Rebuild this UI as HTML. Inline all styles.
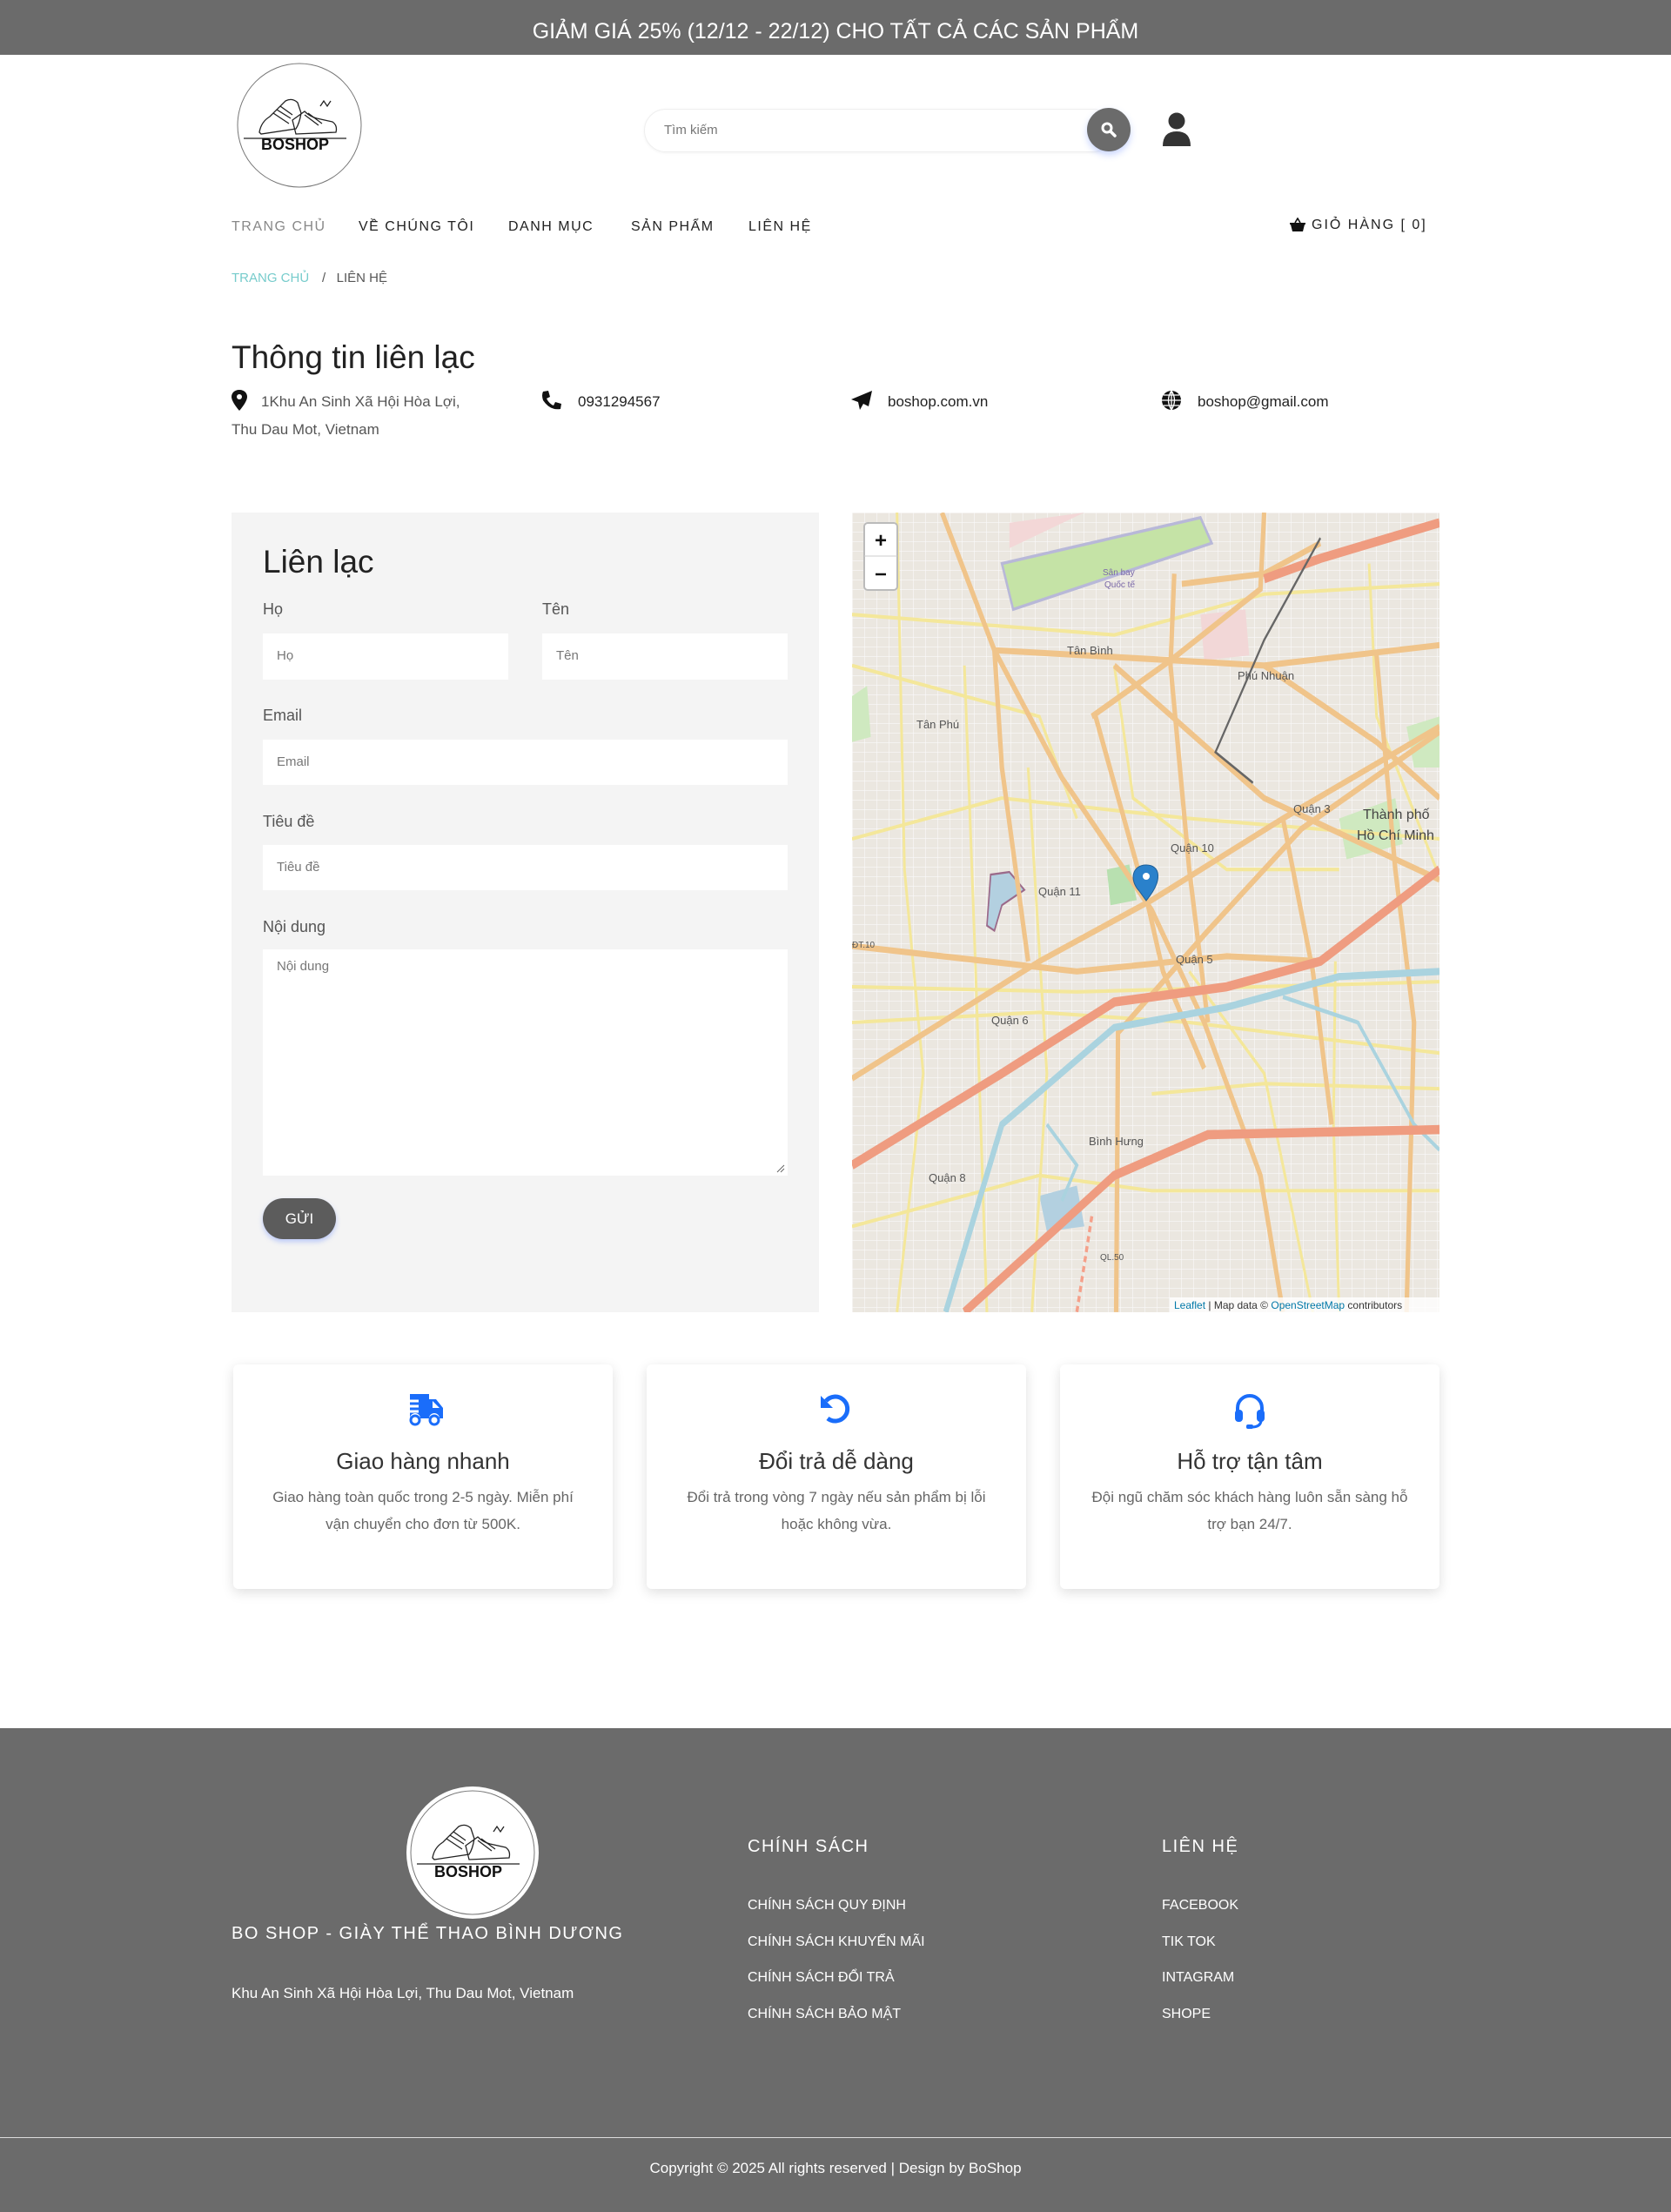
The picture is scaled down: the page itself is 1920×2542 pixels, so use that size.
<!DOCTYPE html>
<html><head><meta charset="utf-8">
<style>
*{box-sizing:border-box;margin:0;padding:0}
body{width:1920px;height:2542px;position:relative;font-family:"Liberation Sans","Noto Sans CJK SC",sans-serif;background:#fff;color:#222;overflow:hidden}
.a{position:absolute;white-space:nowrap}
.top{left:0;top:0;width:1920px;height:63px;background:#6b6b6b;color:#fff;font-size:25px;text-align:center;line-height:72px}
.nav{top:252px;font-size:16px;letter-spacing:1.5px;color:#222}
.inp{background:#fff;position:absolute;font-size:15px;color:#777;padding-left:16px;line-height:52px}
.lbl{font-size:18px;color:#555}
.card{position:absolute;top:1568px;width:436px;height:258px;background:#fff;border-radius:6px;box-shadow:0 4px 14px rgba(0,0,0,.13);text-align:center}
.card h3{font-weight:normal;font-size:26px;color:#333;margin-top:96px}
.card p{font-size:17px;color:#666;line-height:31px;margin-top:10px;padding:0 36px}
.card svg{position:absolute;left:50%;top:32px;transform:translateX(-50%)}
.fl{font-size:16px;color:#fff}
</style></head><body>
<div class="a top">GIẢM GIÁ 25% (12/12 - 22/12) CHO TẤT CẢ CÁC SẢN PHẨM</div>

<svg class="a" style="left:270px;top:72px" width="148" height="148" viewBox="0 0 148 148">
<circle cx="74" cy="72" r="71" fill="#fff" stroke="#777" stroke-width="1"/>
<g fill="none" stroke="#222" stroke-width="1.3">
<path d="M28 80 Q30 68 40 62 L58 44 Q66 40 72 46 L76 58 Q74 70 70 76 L30 82 Z"/>
<path d="M66 66 L80 56 Q86 62 94 64 L112 68 Q118 72 116 80 L70 82 Z"/>
<path d="M44 58 L62 70 M48 54 L64 64 M52 50 L66 60 M80 60 L96 72 M84 58 L100 70"/>
<path d="M98 50 L102 44 L106 50 L110 44"/>
<path d="M10 87 H128"/>
</g>
<text x="69" y="100" text-anchor="middle" font-family="Liberation Sans" font-weight="bold" font-size="18" fill="#111">BOSHOP</text>
</svg>

<div class="a" style="left:740px;top:125px;width:540px;height:50px;border:1px solid #eee;border-radius:25px;box-shadow:0 1px 3px rgba(0,0,0,.05)"></div>
<div class="a" style="left:763px;top:141px;font-size:15px;color:#777">Tìm kiếm</div>
<div class="a" style="left:1249px;top:124px;width:50px;height:50px;border-radius:50%;background:#6b6b6b;box-shadow:0 4px 8px rgba(80,120,255,.3)"></div>
<svg class="a" style="left:1264px;top:139px" width="20" height="20" viewBox="0 0 20 20"><circle cx="8" cy="8" r="5" fill="none" stroke="#fff" stroke-width="3"/><path d="M12 12 L17 17" stroke="#fff" stroke-width="3.5" stroke-linecap="round"/></svg>
<svg class="a" style="left:1334px;top:129px" width="36" height="40" viewBox="0 0 36 40"><circle cx="18" cy="10" r="9.5" fill="#333"/><path d="M2 39 Q2 22 18 22 Q34 22 34 39 Z" fill="#333"/></svg>

<div class="a nav" style="left:266px;color:#888">TRANG CHỦ</div>
<div class="a nav" style="left:412px">VỀ CHÚNG TÔI</div>
<div class="a nav" style="left:584px">DANH MỤC</div>
<div class="a nav" style="left:725px">SẢN PHẨM</div>
<div class="a nav" style="left:860px">LIÊN HỆ</div>
<svg class="a" style="left:1482px;top:250px" width="18" height="16" viewBox="0 0 18 16"><path d="M6 6 L9 1 L12 6" fill="none" stroke="#111" stroke-width="1.6"/><path d="M0 6 H18 V8 H17 L15 16 H3 L1 8 H0Z" fill="#111"/></svg>
<div class="a nav" style="left:1507px;top:250px;letter-spacing:2px">GIỎ HÀNG [ 0]</div>

<div class="a" style="left:266px;top:311px;font-size:15px;color:#7cc;">TRANG CHỦ</div>
<div class="a" style="left:370px;top:311px;font-size:15px;color:#555">/&nbsp;&nbsp;&nbsp;LIÊN HỆ</div>

<div class="a" style="left:266px;top:390px;font-size:37px;color:#222">Thông tin liên lạc</div>
<svg class="a" style="left:266px;top:448px" width="18" height="24" viewBox="0 0 18 24"><path d="M9 0 C3 0 0 4 0 8 C0 14 9 24 9 24 C9 24 18 14 18 8 C18 4 15 0 9 0Z" fill="#111"/><circle cx="9" cy="8" r="3" fill="#fff"/></svg>
<div class="a" style="left:300px;top:452px;font-size:17px;color:#555">1Khu An Sinh Xã Hội Hòa Lợi,</div>
<div class="a" style="left:266px;top:484px;font-size:17px;color:#555">Thu Dau Mot, Vietnam</div>
<svg class="a" style="left:622px;top:448px" width="24" height="24" viewBox="0 0 24 24"><path d="M2 2 L8 1 L10 8 L6 10 Q9 16 14 18 L16 14 L23 16 L22 22 Q10 24 2 12 Q0 6 2 2Z" fill="#111"/></svg>
<div class="a" style="left:664px;top:452px;font-size:17px;color:#222">0931294567</div>
<svg class="a" style="left:978px;top:449px" width="24" height="22" viewBox="0 0 24 22"><path d="M24 0 L0 10 L8 13 L10 22 L14 15 L20 18Z" fill="#111"/></svg>
<div class="a" style="left:1020px;top:452px;font-size:17px;color:#222">boshop.com.vn</div>
<svg class="a" style="left:1334px;top:448px" width="24" height="24" viewBox="0 0 24 24"><circle cx="12" cy="12" r="11" fill="#111"/><path d="M12 1 V23 M1 12 H23 M3 6 H21 M3 18 H21 M12 1 Q5 12 12 23 M12 1 Q19 12 12 23" stroke="#fff" stroke-width="1.3" fill="none"/></svg>
<div class="a" style="left:1376px;top:452px;font-size:17px;color:#222">boshop@gmail.com</div>

<div class="a" style="left:266px;top:589px;width:675px;height:919px;background:#f4f4f4"></div>
<div class="a" style="left:302px;top:625px;font-size:37px;color:#222">Liên lạc</div>
<div class="a lbl" style="left:302px;top:690px">Họ</div>
<div class="a lbl" style="left:623px;top:690px">Tên</div>
<div class="inp" style="left:302px;top:728px;width:282px;height:53px">Họ</div>
<div class="inp" style="left:623px;top:728px;width:282px;height:53px">Tên</div>
<div class="a lbl" style="left:302px;top:812px">Email</div>
<div class="inp" style="left:302px;top:850px;width:603px;height:52px">Email</div>
<div class="a lbl" style="left:302px;top:934px">Tiêu đề</div>
<div class="inp" style="left:302px;top:971px;width:603px;height:52px">Tiêu đề</div>
<div class="a lbl" style="left:302px;top:1055px">Nội dung</div>
<div class="inp" style="left:302px;top:1091px;width:603px;height:260px;line-height:40px">Nội dung</div>
<svg class="a" style="left:892px;top:1338px" width="10" height="10"><path d="M1 9 L9 1 M5 9 L9 5" stroke="#666"/></svg>
<div class="a" style="left:302px;top:1377px;width:84px;height:47px;border-radius:24px;background:#5c5c5c;color:#fff;font-size:17px;text-align:center;line-height:47px;box-shadow:0 3px 6px rgba(80,120,255,.35)">GỬI</div>

<svg class="a" style="left:979px;top:589px" width="675" height="919" viewBox="0 0 675 919">
<defs><pattern id="p" width="14" height="11" patternUnits="userSpaceOnUse"><rect width="14" height="11" fill="#ebe7e0"/><path d="M0 0H14M0 0V11" stroke="#fafafa" stroke-width="1.2"/></pattern></defs>
<rect width="675" height="919" fill="url(#p)"/>
<g transform="scale(0.4305,0.586)">
<path d="M400 100 L930 10 L960 60 L430 190Z" fill="#c5e3a6" stroke="#b8b8d8" stroke-width="6"/>
<path d="M420 20 L620 0 L420 70Z" fill="#f3d7d7"/>
<path d="M930 200 L1050 190 L1060 280 L940 290Z" fill="#f2d7d7"/>
<path d="M680 700 L740 690 L760 760 L690 770Z" fill="#b8e0b0"/>
<path d="M1300 600 L1450 560 L1470 650 L1320 680Z" fill="#cfe9c0"/>
<path d="M1480 420 L1568 400 L1568 500 L1500 500Z" fill="#cfe9c0"/>
<path d="M0 360 L40 340 L50 440 L0 450Z" fill="#cfe9c0"/>
<path d="M370 710 L420 705 L460 740 L400 770 L380 820 L360 810 Z" fill="#b3d0e0" stroke="#9b6a8a" stroke-width="4"/>
<path d="M500 1340 L600 1320 L620 1400 L520 1410Z" fill="#b3d0e0"/>
<g fill="none" stroke="#f4e79a" stroke-width="7">
<path d="M0 200 L700 240 L1100 160 L1568 140"/><path d="M0 640 L400 560 L900 600 L1568 640"/><path d="M0 1000 L500 980 L900 1000 L1568 1060"/><path d="M120 0 L140 700 L190 1100 L120 1568"/><path d="M300 300 L330 900 L360 1568"/><path d="M470 500 L520 1100 L480 1568"/><path d="M900 900 L1100 1100 L1230 1568"/><path d="M0 1400 L500 1300 L800 1330 L1568 1330"/><path d="M1290 880 L1285 1200 L1300 1568"/><path d="M700 300 L750 560 L1000 700 L1300 700"/><path d="M0 930 L600 940 L1568 920"/><path d="M1380 100 L1400 400 L1560 700"/><path d="M0 300 L500 400 L600 600"/><path d="M800 1140 L1100 1120 L1568 1130"/></g>
<g fill="none" stroke="#f0c48a" stroke-width="12">
<path d="M240 0 L380 270 L560 520 L800 780 L940 1000 L1090 1300 L1150 1568"/>
<path d="M380 270 L1100 300 L1568 260"/>
<path d="M0 1110 L500 880 L800 760 L1150 600 L1568 420"/>
<path d="M0 850 L600 900 L1000 870 L1250 880"/>
<path d="M650 400 L790 770 L830 900 L940 1090"/>
<path d="M1100 0 L1090 150 L850 290 L640 400"/>
<path d="M1100 300 L1400 450 L1568 560"/>
<path d="M1568 430 L1200 620 L950 820 L710 1020 L705 1568"/>
<path d="M860 120 L850 300 L900 700 L950 1000"/>
<path d="M380 270 L400 500 L470 880"/>
<path d="M1150 600 L1230 900 L1280 1200"/>
<path d="M1400 280 L1450 700 L1500 1000 L1480 1568"/>
<path d="M880 140 L1100 120 L1250 60"/>
<path d="M700 300 L1100 560 L1568 720"/>
</g>
<path d="M250 1568 L400 1200 L700 1010 L1000 970 L1300 910 L1568 900" fill="none" stroke="#aad3df" stroke-width="14"/>
<path d="M1150 950 L1350 1000 L1500 1200 L1568 1250" fill="none" stroke="#aad3df" stroke-width="8"/>
<path d="M520 1200 L600 1280 L560 1350" fill="none" stroke="#aad3df" stroke-width="8"/>
<g fill="none" stroke="#ef9c80" stroke-width="18">
<path d="M1100 130 L1250 90 L1568 20"/>
<path d="M0 1280 L400 1100 L700 960 L1000 930 L1250 880 L1568 700"/>
<path d="M300 1568 L700 1300 L950 1220 L1568 1210"/>
</g>
<path d="M1250 50 L1100 250 L970 470 L1070 530" fill="none" stroke="#666" stroke-width="5"/>
<path d="M640 1380 L600 1568" fill="none" stroke="#f5a08a" stroke-width="8" stroke-dasharray="12 8"/>
</g>
<g font-family="Liberation Sans" fill="#555" font-size="13">
<text x="74" y="248">Tân Phú</text><text x="247" y="163">Tân Bình</text><text x="443" y="192">Phú Nhuận</text>
<text x="214" y="440">Quận 11</text><text x="366" y="390">Quận 10</text><text x="507" y="345">Quận 3</text>
<text x="372" y="518">Quận 5</text><text x="160" y="588">Quận 6</text><text x="88" y="769">Quận 8</text>
<text x="272" y="727">Bình Hưng</text>
<text x="587" y="352" font-size="16" fill="#444">Thành phố</text><text x="580" y="376" font-size="16" fill="#444">Hồ Chí Minh</text>
<text x="288" y="72" font-size="10" fill="#7a68a8">Sân bay</text><text x="290" y="86" font-size="10" fill="#7a68a8">Quốc tế</text>
<text x="0" y="500" font-size="10">ĐT.10</text><text x="285" y="859" font-size="10">QL.50</text>
</g>
<path d="M330 435 C318 422 322 405 338 405 C354 405 358 422 338 446Z" fill="#2a81cb" stroke="#1f5f96"/>
<circle cx="338" cy="418" r="4" fill="#fff"/>
<rect x="14" y="12" width="38" height="77" rx="4" fill="#fff" stroke="#bbb" stroke-width="2"/>
<path d="M14 50 H52" stroke="#ccc"/>
<text x="33" y="40" text-anchor="middle" font-family="Liberation Sans" font-size="24" font-weight="bold" fill="#111">+</text>
<path d="M27 71 H39" stroke="#111" stroke-width="2.5"/>
<rect x="365" y="902" width="310" height="17" fill="#fff" opacity=".8"/>
<text x="370" y="915" font-family="Liberation Sans" font-size="12" fill="#333"><tspan fill="#0078a8">Leaflet</tspan> | Map data © <tspan fill="#0078a8">OpenStreetMap</tspan> contributors</text>
</svg>

<div class="card" style="left:268px">
<svg width="50" height="40" viewBox="0 0 50 40"><path d="M10 2 H32 V8 H40 L48 18 V30 H44 A6 6 0 0 0 32 30 H22 A6 6 0 0 0 10 30 Z" fill="#1a6dfa"/><circle cx="16" cy="32" r="5" fill="none" stroke="#1a6dfa" stroke-width="3"/><circle cx="38" cy="32" r="5" fill="none" stroke="#1a6dfa" stroke-width="3"/><path d="M2 10 H20 M4 16 H20 M2 22 H20" stroke="#fff" stroke-width="3"/><path d="M36 10 L44 18 H36Z" fill="#fff"/></svg>
<h3>Giao hàng nhanh</h3><p>Giao hàng toàn quốc trong 2-5 ngày. Miễn phí vận chuyển cho đơn từ 500K.</p></div>
<div class="card" style="left:743px">
<svg width="40" height="40" viewBox="0 0 40 40"><path d="M8 10 A14 14 0 1 1 10 30" fill="none" stroke="#1a6dfa" stroke-width="5"/><path d="M2 4 V18 H16Z" fill="#1a6dfa"/></svg>
<h3>Đổi trả dễ dàng</h3><p>Đổi trả trong vòng 7 ngày nếu sản phẩm bị lỗi hoặc không vừa.</p></div>
<div class="card" style="left:1218px">
<svg width="40" height="42" viewBox="0 0 40 42"><path d="M6 24 V18 A14 14 0 0 1 34 18 V24" fill="none" stroke="#1a6dfa" stroke-width="4"/><rect x="3" y="20" width="9" height="14" rx="4" fill="#1a6dfa"/><rect x="28" y="20" width="9" height="14" rx="4" fill="#1a6dfa"/><path d="M33 33 Q32 40 22 40" fill="none" stroke="#1a6dfa" stroke-width="3"/><rect x="16" y="37" width="8" height="5" rx="2" fill="#1a6dfa"/></svg>
<h3>Hỗ trợ tận tâm</h3><p>Đội ngũ chăm sóc khách hàng luôn sẵn sàng hỗ trợ bạn 24/7.</p></div>

<div class="a" style="left:0;top:1986px;width:1920px;height:556px;background:#6b6b6b"></div>
<svg class="a" style="left:464px;top:2050px" width="158" height="158" viewBox="-5 -5 158 158">
<circle cx="74" cy="74" r="76" fill="#fff"/>
<circle cx="74" cy="74" r="71" fill="#fff" stroke="#777"/>
<g fill="none" stroke="#222" stroke-width="1.3">
<path d="M28 80 Q30 68 40 62 L58 44 Q66 40 72 46 L76 58 Q74 70 70 76 L30 82 Z"/>
<path d="M66 66 L80 56 Q86 62 94 64 L112 68 Q118 72 116 80 L70 82 Z"/>
<path d="M44 58 L62 70 M48 54 L64 64 M52 50 L66 60 M80 60 L96 72 M84 58 L100 70"/>
<path d="M98 50 L102 44 L106 50 L110 44"/><path d="M10 87 H128"/></g>
<text x="69" y="102" text-anchor="middle" font-family="Liberation Sans" font-weight="bold" font-size="18" fill="#111">BOSHOP</text>
</svg>
<div class="a" style="left:266px;top:2211px;font-size:20px;color:#fff;letter-spacing:1.5px">BO SHOP - GIÀY THỂ THAO BÌNH DƯƠNG</div>
<div class="a fl" style="left:266px;top:2281px;font-size:17px">Khu An Sinh Xã Hội Hòa Lợi, Thu Dau Mot, Vietnam</div>
<div class="a" style="left:859px;top:2111px;font-size:20px;color:#fff;letter-spacing:1.5px">CHÍNH SÁCH</div>
<div class="a fl" style="left:859px;top:2181px">CHÍNH SÁCH QUY ĐỊNH</div>
<div class="a fl" style="left:859px;top:2223px">CHÍNH SÁCH KHUYẾN MÃI</div>
<div class="a fl" style="left:859px;top:2264px">CHÍNH SÁCH ĐỔI TRẢ</div>
<div class="a fl" style="left:859px;top:2306px">CHÍNH SÁCH BẢO MẬT</div>
<div class="a" style="left:1335px;top:2111px;font-size:20px;color:#fff;letter-spacing:1.5px">LIÊN HỆ</div>
<div class="a fl" style="left:1335px;top:2181px">FACEBOOK</div>
<div class="a fl" style="left:1335px;top:2223px">TIK TOK</div>
<div class="a fl" style="left:1335px;top:2264px">INTAGRAM</div>
<div class="a fl" style="left:1335px;top:2306px">SHOPE</div>
<div class="a" style="left:0;top:2456px;width:1920px;height:1px;background:#ddd"></div>
<div class="a fl" style="left:0;width:1920px;text-align:center;top:2482px;font-size:17px">Copyright © 2025 All rights reserved | Design by BoShop</div>
</body></html>
